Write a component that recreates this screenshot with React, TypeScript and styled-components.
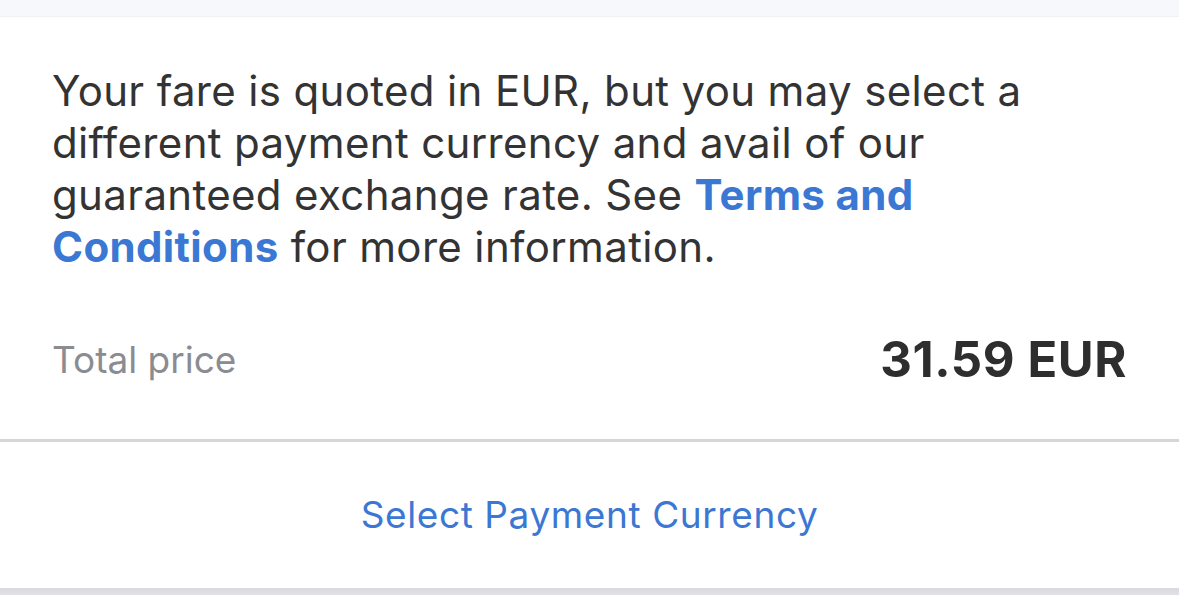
import styled, { createGlobalStyle } from 'styled-components'

const GlobalStyle = createGlobalStyle`
  html, body {
    margin: 0;
    padding: 0;
    background: #ffffff;
    font-family: Inter, "Noto Sans", "Liberation Sans", sans-serif;
    -webkit-font-smoothing: antialiased;
  }
`

const Page = styled.div`
  width: 1179px;
  height: 595px;
  display: flex;
  flex-direction: column;
  background: #ffffff;
  overflow: hidden;
`

const TopStrip = styled.div`
  height: 16px;
  flex-shrink: 0;
  background: #f7f8fc;
  border-bottom: 1px solid #f0f1f4;
`

const Card = styled.div`
  display: flex;
  flex-direction: column;
  background: #ffffff;
  flex: 1;
`

const Body = styled.div`
  padding: 48px 52px 0 52px;
`

const Notice = styled.p`
  margin: 0;
  font-size: 42px;
  line-height: 52px;
  color: #333333;
  letter-spacing: 0.35px;
`

const Link = styled.a`
  color: #3a78d4;
  font-weight: 700;
  text-decoration: none;
`

const TotalRow = styled.div`
  display: flex;
  justify-content: space-between;
  align-items: center;
  height: 80px;
  margin-top: 46px;
  padding-bottom: 40px;
`

const TotalLabel = styled.span`
  font-size: 37px;
  color: #8a8c91;
`

const TotalValue = styled.span`
  font-size: 49px;
  font-weight: 700;
  color: #2e2e2e;
  letter-spacing: 0.6px;
`

const Divider = styled.div`
  height: 3px;
  background: #d6d6d6;
`

const ActionButton = styled.button`
  height: 145px;
  border: none;
  background: transparent;
  font-family: inherit;
  font-size: 37px;
  color: #3b77d3;
  letter-spacing: 0.6px;
  cursor: pointer;
  display: flex;
  align-items: center;
  justify-content: center;
`

const BottomShadow = styled.div`
  height: 7px;
  flex-shrink: 0;
  background: linear-gradient(#d9d9de, #e2e2e6);
`

export default function App() {
  return (
    <>
      <GlobalStyle />
      <Page>
        <TopStrip />
        <Card>
          <Body>
            <Notice>
              Your fare is quoted in EUR, but you may select a different payment
              currency and avail of our guaranteed exchange rate. See{' '}
              <Link href="#">Terms and Conditions</Link> for more information.
            </Notice>
            <TotalRow>
              <TotalLabel>Total price</TotalLabel>
              <TotalValue>31.59 EUR</TotalValue>
            </TotalRow>
          </Body>
          <Divider />
          <ActionButton>Select Payment Currency</ActionButton>
        </Card>
        <BottomShadow />
      </Page>
    </>
  )
}
